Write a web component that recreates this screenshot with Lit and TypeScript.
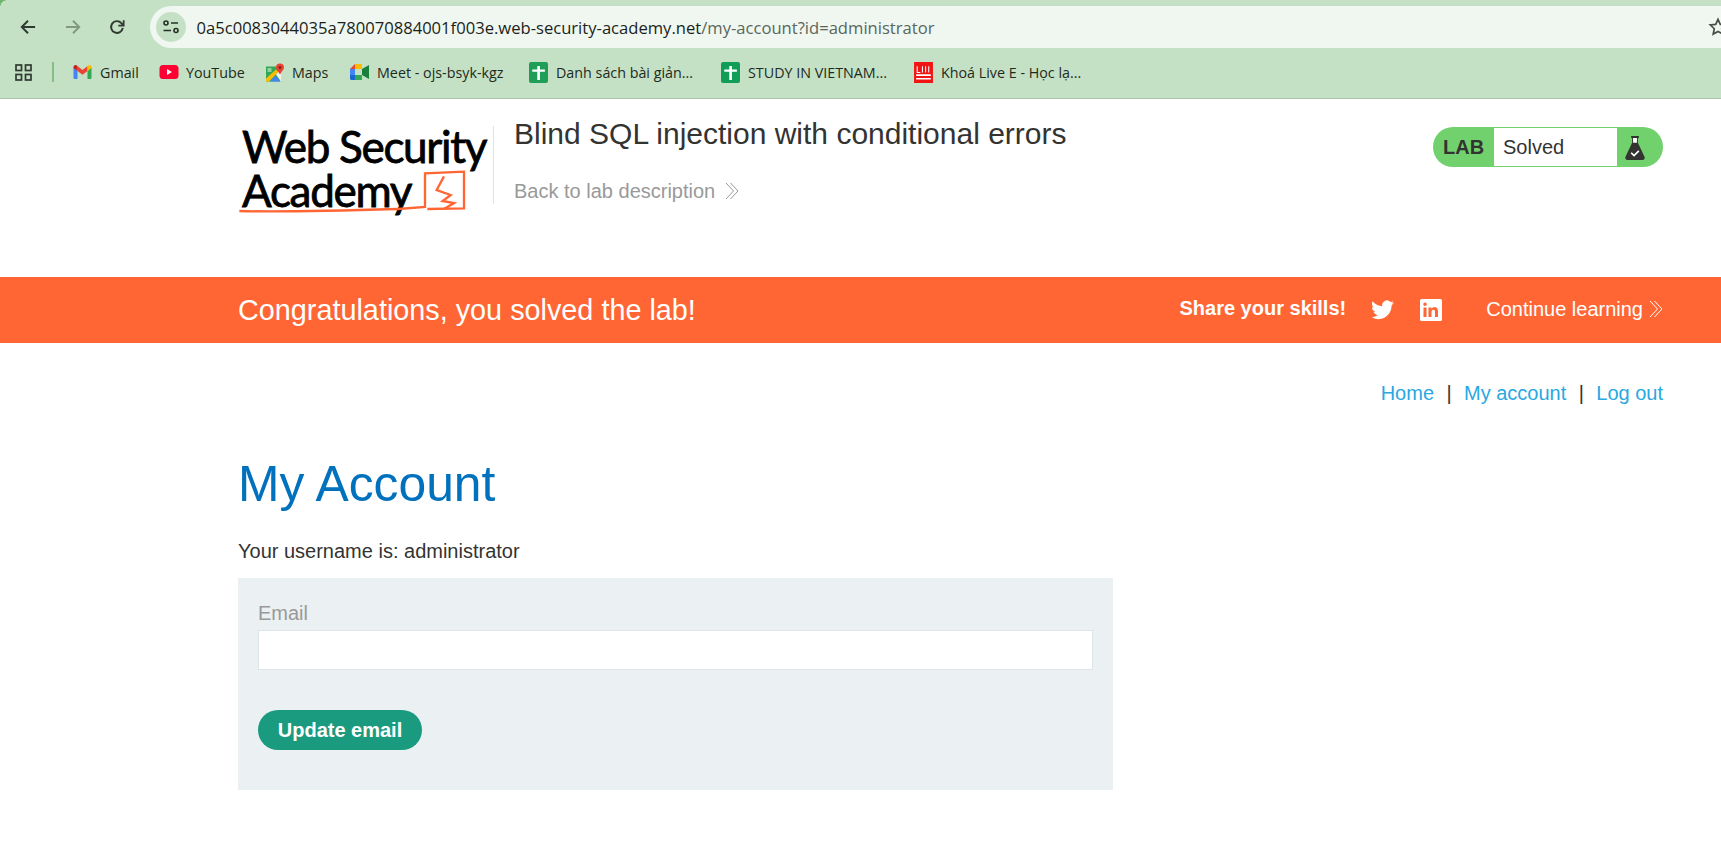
import { LitElement, html, css } from 'lit';
import { customElement } from 'lit/decorators.js';

const chevrons = html`<svg class="chev" viewBox="0 0 14 18" width="14" height="18" fill="none" stroke="currentColor" stroke-width="1">
  <path d="M1 1 L8.500 9 L1 17" /><path d="M5.500 1 L13 9 L5.500 17" />
</svg>`;

const sheetIcon = (color: string) => html`<svg viewBox="0 0 19 21" width="19" height="21">
  <rect width="19" height="21" rx="2" fill=${color} />
  <path d="M8.300 4h2.600v3.400h5v2.400h-5V18H8.300V9.800h-5V7.400h5z" fill="#fff" />
</svg>`;

const gmail = html`<svg width="19" height="14" viewBox="0 0 18 14">
  <path d="M0 2v10.700C0 13.400.6 14 1.300 14H4V6z" fill="#4285f4" />
  <path d="M14 6v8h2.700c.7 0 1.300-.6 1.300-1.300V2z" fill="#34a853" />
  <path d="M4 6V1L9 5l5-4v5L9 9.800z" fill="#ea4335" />
  <path d="M0 2c0-1.700 2-2.600 3.200-1.500L4 1v5L0 3z" fill="#c5221f" />
  <path d="M14 1l.8-.5C16 -.6 18 .3 18 2v1l-4 3z" fill="#fbbc04" />
</svg>`;

const youtube = html`<svg width="20" height="14" viewBox="0 0 19 14">
  <rect width="19" height="14" rx="3.500" fill="#ff0033" />
  <path d="M7.500 4l5 3-5 3z" fill="#fff" />
</svg>`;

const maps = html`<svg width="18" height="19" viewBox="0 0 18 18">
  <rect y="3" width="14" height="15" fill="#34a853" />
  <path d="M0 15L10 6l2.500 2.500L3 18H0z" fill="#fbbc04" />
  <path d="M4 18l5-6 6 6z" fill="#4285f4" />
  <path d="M10 11l3-3 2 1v9z" fill="#f1f1e8" />
  <path d="M1.500 4.500h4v4h-4z" fill="#8fd0a0" />
  <path d="M14 0a4 4 0 0 1 4 4c0 2.500-2.600 4-4 7-1.400-3-4-4.500-4-7a4 4 0 0 1 4-4z" fill="#ea4335" />
  <circle cx="14" cy="4" r="1.400" fill="#8a1c14" />
</svg>`;

const meet = html`<svg width="19" height="16" viewBox="0 0 19 16">
  <path d="M0 5l5-5v5z" fill="#ea4335" />
  <path d="M5 0h7v5H5z" fill="#fbbc04" />
  <path d="M0 5h5v6H0z" fill="#4285f4" />
  <path d="M0 11h5v5H1.500C.6 16 0 15.300 0 14.500z" fill="#1967d2" />
  <path d="M5 11h7v5H5z" fill="#34a853" />
  <path d="M12 5v6l7 4V1z" fill="#188038" />
  <rect x="5" y="5" width="7" height="6" fill="#c5e1c5" />
</svg>`;

const live = html`<svg width="19" height="21" viewBox="0 0 18 20">
  <rect width="18" height="20" fill="#f01414" />
  <path d="M2 12.500h14M2 16h14" stroke="#fff" stroke-width="1.500" />
  <path d="M3 4v6h3M8 4v6M11 4v6M14 4v6" stroke="#fff" stroke-width="1" fill="none" />
</svg>`;

const bookmarks = [
  { icon: gmail, label: 'Gmail', width: 86 },
  { icon: youtube, label: 'YouTube', width: 106 },
  { icon: maps, label: 'Maps', width: 85 },
  { icon: meet, label: 'Meet - ojs-bsyk-kgz', width: 179 },
  { icon: sheetIcon('#1e9e56'), label: 'Danh sách bài giản...', width: 192 },
  { icon: sheetIcon('#0f9d58'), label: 'STUDY IN VIETNAM...', width: 193 },
  { icon: live, label: 'Khoá Live E - Học lạ...', width: 160 },
];

@customElement('app-root')
export class AppRoot extends LitElement {
  static styles = css`
    :host {
      display: block;
      height: 858px;
      overflow: hidden;
      background: #fff;
      font-family: 'Liberation Sans', Arial, sans-serif;
      color: #333332;
    }

    .browser {
      position: relative;
      background: #c5e1c5;
      height: 99px;
      box-sizing: border-box;
      border-bottom: 1px solid #a9c6a9;
      font-family: 'Open Sans', 'Noto Sans', sans-serif;
      overflow: hidden;
    }
    .corner {
      position: absolute;
      left: 0;
      top: 0;
      width: 7px;
      height: 7px;
      background: radial-gradient(circle at 100% 100%, transparent 6.500px, #6fb76f 7px);
    }
    .toolbar {
      display: flex;
      align-items: center;
      height: 42px;
      margin-top: 6px;
    }
    .nav-btn {
      width: 44.5px;
      display: flex;
      justify-content: center;
      flex: none;
      color: #2f3a30;
    }
    .nav-btn.off { color: #7f9a80; }
    .nav-group { display: flex; padding-left: 6px; width: 144px; flex: none; }
    .omnibox {
      flex: 1;
      height: 42px;
      border-radius: 21px 0 0 21px;
      background: #eff7f0;
      display: flex;
      align-items: center;
      padding-left: 6px;
      position: relative;
    }
    .tune {
      width: 30px;
      height: 30px;
      border-radius: 50%;
      background: #c5e1c5;
      display: flex;
      align-items: center;
      justify-content: center;
      margin-right: 10.500px;
    }
    .url { font-size: 16.6px; color: #1b1f1b; white-space: nowrap; }
    .url span { color: #5a665b; }
    .star { position: absolute; left: 1558px; top: 11px; }

    .bookmarks {
      display: flex;
      align-items: center;
      height: 44px;
      margin-top: 2px;
      padding-left: 15px;
      font-size: 14.3px;
      color: #1f2a20;
    }
    .apps { display: block; flex: none; }
    .sep { width: 2px; height: 20px; background: #84bd86; margin: 0 19px 0 20px; flex: none; }
    .bm { display: flex; align-items: center; gap: 8px; white-space: nowrap; flex: none; }
    .bm .ic { width: 19px; display: flex; justify-content: center; flex: none; }
    .bm svg { display: block; flex: none; }

    .lab-header {
      height: 178px;
      box-sizing: border-box;
      padding: 26px 58px 0 238px;
      display: flex;
      align-items: flex-start;
    }
    .logo {
      position: relative;
      width: 255px;
      height: 90px;
      flex: none;
      color: #000;
      font-family: Lato, 'Open Sans', sans-serif;
      font-size: 44px;
      line-height: 44px;
      letter-spacing: -1.300px;
      font-weight: 400;
      white-space: nowrap;
      -webkit-text-stroke: 0.8px #000;
    }
    .logo .l1, .logo .l2 { display: block; padding-left: 4px; }
    .logo .l1 { margin-top: -1px; }
    .logo svg { position: absolute; left: -18px; top: -20px; }
    .title-block {
      border-left: 1px solid #e0e3e5;
      margin-top: 1px;
      padding-left: 20px;
      height: 78px;
      flex: 1;
    }
    .title { font-size: 30px; line-height: 36px; margin-top: -10px; white-space: nowrap; }
    .back {
      display: flex;
      align-items: center;
      gap: 10px;
      margin-top: 27px;
      font-size: 20px;
      line-height: 24px;
      color: #999;
    }
    .badge {
      display: flex;
      align-items: stretch;
      height: 40px;
      width: 230px;
      margin-top: 2px;
      border-radius: 20px;
      overflow: hidden;
      background: #70d16d;
      flex: none;
    }
    .badge .lab {
      width: 61px;
      box-sizing: border-box;
      padding-left: 10px;
      font-weight: bold;
      font-size: 20px;
      line-height: 40px;
      color: #333332;
    }
    .badge .status {
      width: 123px;
      margin: 1px 0;
      background: #fff;
      padding-left: 9px;
      box-sizing: border-box;
      font-size: 20px;
      line-height: 38px;
    }
    .badge .flask { flex: 1; display: flex; align-items: center; padding-left: 8px; }

    .banner {
      height: 66px;
      background: #ff6633;
      color: #fff;
      display: flex;
      align-items: center;
      padding: 0 58px 0 238px;
    }
    .banner h4 { margin: 0; flex: 1; font-size: 28.800px; font-weight: 400; }
    .share { font-weight: bold; font-size: 20px; margin: -3px 25px 0 0; }
    .social { display: block; }
    .social.in { margin-left: 26px; }
    .continue { display: flex; align-items: center; gap: 6px; font-size: 20px; margin: -2px 0 0 44px; }

    .top-links {
      display: flex;
      justify-content: flex-end;
      align-items: center;
      padding: 38px 58px 0 238px;
      font-size: 20px;
      line-height: 24px;
      color: #333332;
    }
    .top-links a { color: #2aa8e0; text-decoration: none; }
    .top-links i { font-style: normal; margin: 0 12.400px; }

    main { padding: 0 58px 0 238px; }
    h1 { margin: 49px 0 0; font-size: 49.800px; line-height: 60px; font-weight: 400; color: #0071bc; }
    .username { margin: 25px 0 0; font-size: 20px; line-height: 24px; }
    .panel {
      width: 875px;
      height: 212px;
      margin-top: 15px;
      box-sizing: border-box;
      padding: 23px 20px 0;
      background: #ebf0f2;
    }
    .panel label { display: block; font-size: 20px; line-height: 24px; color: #999; }
    .panel input {
      display: block;
      width: 100%;
      height: 40px;
      margin-top: 5px;
      box-sizing: border-box;
      background: #fff;
      border: 1px solid #dfe4e6;
      outline: none;
    }
    .panel button {
      display: block;
      width: 164px;
      height: 40px;
      margin-top: 40px;
      border: 0;
      border-radius: 20px;
      background: #1a9b80;
      color: #fff;
      font-family: inherit;
      font-weight: bold;
      font-size: 20px;
      padding: 0;
    }
  `;

  render() {
    return html`
      <div class="browser">
        <div class="corner"></div>
        <div class="toolbar">
          <div class="nav-group">
            <div class="nav-btn">
              <svg width="16" height="16" viewBox="0 0 18 18" fill="none" stroke="currentColor" stroke-width="2.200"><path d="M17 9H2M9 2L2 9l7 7" /></svg>
            </div>
            <div class="nav-btn off">
              <svg width="16" height="16" viewBox="0 0 18 18" fill="none" stroke="currentColor" stroke-width="2.200"><path d="M1 9h15M9 2l7 7-7 7" /></svg>
            </div>
            <div class="nav-btn">
              <svg width="16" height="16" viewBox="0 0 18 18" fill="none" stroke="currentColor" stroke-width="2.200"><path d="M15.500 10a6.600 6.600 0 1 1-1.600-5.400L16 7" /><path d="M16.500 1.500V7.500H10.500" stroke-width="2" /></svg>
            </div>
          </div>
          <div class="omnibox">
            <div class="tune">
              <svg width="16" height="14" viewBox="0 0 16 14" fill="none" stroke="#263028" stroke-width="1.600"><circle cx="3" cy="3" r="2" /><path d="M8 3H15M0.500 10.500h7.500" /><circle cx="13" cy="10.500" r="2" /></svg>
            </div>
            <div class="url">0a5c0083044035a780070884001f003e.web-security-academy.net<span>/my-account?id=administrator</span></div>
            <svg class="star" width="20" height="20" viewBox="0 0 20 20" fill="none" stroke="#454f46" stroke-width="1.700"><path d="M10 2.400l2.300 5 5.400.6-4 3.700 1.100 5.400L10 14.400 5.200 17.100l1.100-5.400-4-3.700 5.400-.6z" /></svg>
          </div>
        </div>
        <div class="bookmarks">
          <svg class="apps" width="17" height="17" viewBox="0 0 17 17" fill="none" stroke="#2f3a30" stroke-width="1.700"><rect x="1" y="1" width="5.500" height="5.500" /><rect x="10.500" y="1" width="5.500" height="5.500" /><rect x="1" y="10.500" width="5.500" height="5.500" /><rect x="10.500" y="10.500" width="5.500" height="5.500" /></svg>
          <div class="sep"></div>
          ${bookmarks.map(b => html`<div class="bm" style="width:${b.width}px"><span class="ic">${b.icon}</span>${b.label}</div>`)}
        </div>
      </div>

      <div class="lab-header">
        <div class="logo">
          <span class="l1">Web Security</span>
          <span class="l2">Academy</span>
          <svg width="300" height="125" viewBox="0 0 900 375" fill="none" stroke="#ff6633" stroke-width="7">
            <path d="M58 318C200 322 400 316 535 312L615 306L615 205L732 200L732 310L622 312" />
            <path d="M672 214L650 255L692 270L668 288L702 294L672 312" />
          </svg>
        </div>
        <div class="title-block">
          <div class="title">Blind SQL injection with conditional errors</div>
          <div class="back">Back to lab description ${chevrons}</div>
        </div>
        <div class="badge">
          <div class="lab">LAB</div>
          <div class="status">Solved</div>
          <div class="flask">
            <svg width="20" height="25" viewBox="0 0 20 26">
              <path d="M6 1h8v2h-1v5l7 15c.5 1.500-.5 3-2 3H2c-1.500 0-2.500-1.500-2-3L7 8V3H6z" fill="#333332" />
              <path d="M8 3h4v5H8z" fill="#fff" />
              <path d="M6 18.500l3 3 5-5" stroke="#fff" stroke-width="1.700" fill="none" />
            </svg>
          </div>
        </div>
      </div>

      <div class="banner">
        <h4>Congratulations, you solved the lab!</h4>
        <div class="share">Share your skills!</div>
        <svg class="social" width="23" height="20" viewBox="0 0 24 20" fill="#fff"><path d="M24 2.400c-.9.400-1.800.7-2.800.8 1-.6 1.800-1.600 2.200-2.700-1 .6-2 1-3.100 1.200A4.900 4.900 0 0 0 11.800 6.100C7.700 5.900 4.100 4 1.700.9c-.4.700-.7 1.600-.7 2.500 0 1.700.9 3.200 2.200 4.100-.8 0-1.600-.2-2.200-.6v.1c0 2.400 1.700 4.400 3.900 4.800-.7.200-1.500.2-2.200.1.600 2 2.400 3.400 4.600 3.400A9.900 9.900 0 0 1 0 17.400 13.900 13.900 0 0 0 7.500 19.600c9 0 14-7.500 14-14v-.6c1-.7 1.800-1.600 2.500-2.600z" /></svg>
        <svg class="social in" width="22" height="22" viewBox="0 0 22 22"><rect width="22" height="22" rx="1.500" fill="#fff" /><path d="M3.500 8.500h3V18h-3zM5 3.500a1.700 1.700 0 1 1 0 3.500 1.700 1.700 0 0 1 0-3.500zM8.500 8.500h2.900v1.300c.5-.9 1.600-1.600 3-1.600 3 0 3.600 2 3.600 4.500V18h-3v-4.700c0-1.200 0-2.500-1.600-2.500s-1.900 1.200-1.900 2.400V18h-3z" fill="#ff6633" /></svg>
        <div class="continue">Continue learning ${chevrons}</div>
      </div>

      <div class="top-links">
        <a>Home</a><i>|</i><a>My account</a><i>|</i><a>Log out</a>
      </div>

      <main>
        <h1>My Account</h1>
        <p class="username">Your username is: administrator</p>
        <form class="panel">
          <label>Email</label>
          <input type="email" />
          <button type="button">Update email</button>
        </form>
      </main>
    `;
  }
}
